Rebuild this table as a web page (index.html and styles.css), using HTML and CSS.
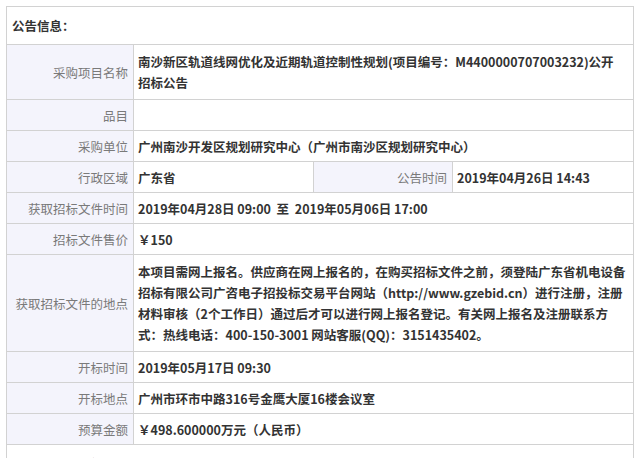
FILE: index.html
```html
<!DOCTYPE html>
<html lang="zh">
<head>
<meta charset="utf-8">
<link rel="stylesheet" href="styles.css">
</head>
<body>
<table class="info">
  <colgroup>
    <col class="c1"><col class="c2"><col class="c3"><col class="c4">
  </colgroup>
  <tr><td class="head" colspan="4">公告信息：</td></tr>
  <tr><th>采购项目名称</th><td colspan="3" class="multi">南沙新区轨道线网优化及近期轨道控制性规划(项目编号：M4400000707003232)公开<br>招标公告</td></tr>
  <tr><th>品目</th><td colspan="3"></td></tr>
  <tr><th>采购单位</th><td colspan="3">广州南沙开发区规划研究中心（广州市南沙区规划研究中心）</td></tr>
  <tr><th>行政区域</th><td>广东省</td><th>公告时间</th><td>2019年04月26日 14:43</td></tr>
  <tr><th>获取招标文件时间</th><td colspan="3">2019年04月28日 09:00&nbsp; 至&nbsp; 2019年05月06日 17:00</td></tr>
  <tr><th>招标文件售价</th><td colspan="3">￥150</td></tr>
  <tr><th>获取招标文件的地点</th><td colspan="3" class="multi">本项目需网上报名。供应商在网上报名的，在购买招标文件之前，须登陆广东省机电设备招标有限公司广咨电子招投标交易平台网站（http://www.gzebid.cn）进行注册，注册材料审核（2个工作日）通过后才可以进行网上报名登记。有关网上报名及注册联系方式：热线电话：400-150-3001 网站客服(QQ)：3151435402。</td></tr>
  <tr><th>开标时间</th><td colspan="3">2019年05月17日 09:30</td></tr>
  <tr><th>开标地点</th><td colspan="3">广州市环市中路316号金鹰大厦16楼会议室</td></tr>
  <tr><th>预算金额</th><td colspan="3">￥498.600000万元（人民币）</td></tr>
  <tr><td class="head" colspan="4">联系人及联系方式：</td></tr>
</table>
</body>
</html>
```
FILE: styles.css
```css
html, body {
  margin: 0;
  background: #fff;
}
body {
  padding: 6px 0 0 6px;
  font-family: "Microsoft YaHei", "Noto Sans CJK SC", "Noto Sans", sans-serif;
  font-size: 12.5px;
  color: #333;
}
.info {
  width: 628px;
  border-collapse: collapse;
  table-layout: fixed;
  border: 1px solid #d2d2d2;
}
.c1 { width: 127px; }
.c2 { width: 180px; }
.c3 { width: 139px; }
.info th, .info td {
  border: 1px solid #d2d2d2;
  padding: 5px 1px 4px 4px;
  line-height: 21px;
  vertical-align: middle;
  word-break: break-all;
}
.info th {
  background: #f4f4fc;
  color: #7a7a7a;
  font-weight: normal;
  text-align: right;
  padding: 5px 5px 4px 0;
}
.info td {
  font-weight: bold;
  color: #333;
  text-align: left;
  height: 21px;
}
.info td.multi {
  padding-top: 6px;
  padding-bottom: 6px;
}
.info td.head {
  padding: 8px 5px;
  font-weight: bold;
  color: #333;
}
```
